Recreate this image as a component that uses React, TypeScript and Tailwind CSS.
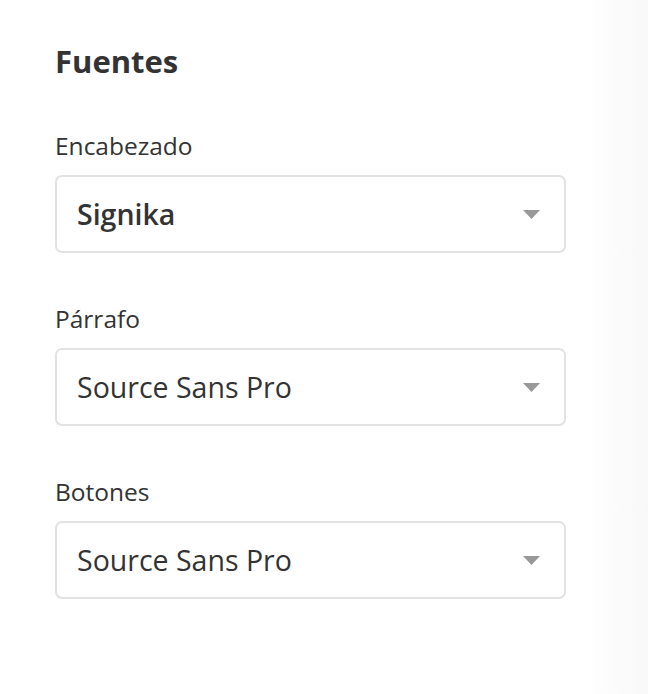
const fonts = [
  { label: "Encabezado", value: "Signika", strong: true },
  { label: "Párrafo", value: "Source Sans Pro" },
  { label: "Botones", value: "Source Sans Pro" },
];

function Caret() {
  return (
    <svg width="17" height="9" viewBox="0 0 17 9" className="shrink-0">
      <path d="M0 0h17L8.5 9z" fill="#999999" />
    </svg>
  );
}

function FontSelect({ label, value, strong }: { label: string; value: string; strong?: boolean }) {
  return (
    <div className="flex flex-col">
      <label className="text-[24.5px] leading-[28px] text-[#333333] mb-[15px]">{label}</label>
      <button
        type="button"
        className="flex h-[78px] w-full items-center justify-between rounded-[7px] border-2 border-[#e2e2e2] bg-white pl-[20px] pr-[24px] text-left"
      >
        <span
          className={`text-[28.5px] leading-none text-[#333333] ${strong ? "font-semibold" : "font-normal"}`}
        >
          {value}
        </span>
        <Caret />
      </button>
    </div>
  );
}

export default function App() {
  return (
    <div
      className="min-h-[694px] w-full bg-[linear-gradient(to_right,#ffffff_586px,#fcfcfc_612px,#f8f8f8_648px)]"
      style={{ fontFamily: '"Open Sans", "Noto Sans", sans-serif' }}
    >
      <div className="ml-[55px] flex w-[511px] flex-col pt-[43px]">
        <h2 className="text-[31px] font-bold leading-[36px] text-[#333333]">Fuentes</h2>
        <div className="mt-[53px] flex flex-col gap-[52px]">
          {fonts.map((f) => (
            <FontSelect key={f.label} {...f} />
          ))}
        </div>
      </div>
    </div>
  );
}
